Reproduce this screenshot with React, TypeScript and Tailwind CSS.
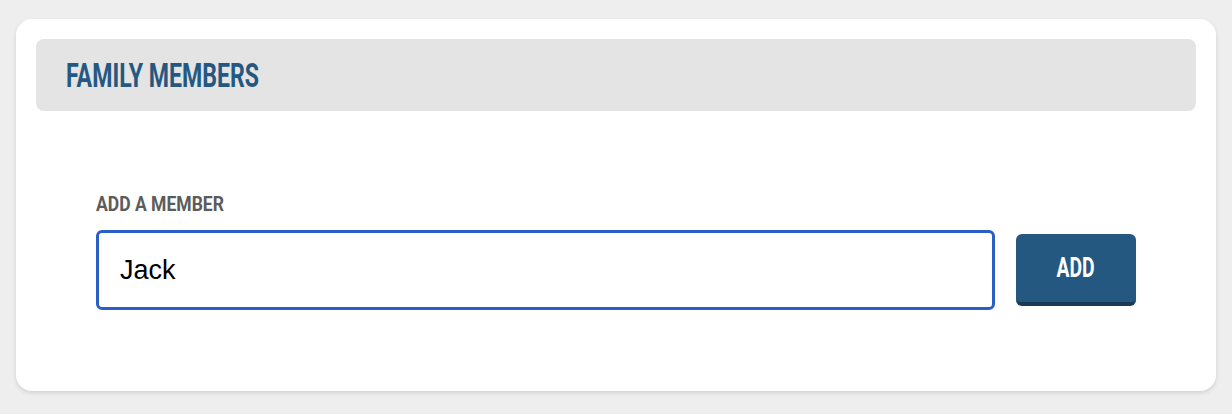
import React, { useState } from 'react';

const condensed = { fontFamily: 'Roboto, "DejaVu Sans Condensed", sans-serif' };

export default function App() {
    const [name, setName] = useState('Jack');

    return (
        <div className="min-h-screen bg-[#eeeeee] px-4 pt-[19px] pb-6">
            <div className="bg-white rounded-2xl p-5 shadow-[0_2px_4px_rgba(0,0,0,0.12)]">
                <div className="h-[72px] bg-[#e4e4e4] rounded-lg flex items-center px-[30px]">
                    <h2 style={condensed} className="inline-block origin-left scale-x-[0.68] text-[34px] font-bold text-[#255880] leading-none whitespace-nowrap">
                        FAMILY MEMBERS
                    </h2>
                </div>
                <div className="px-[60px] pt-[83px] pb-[61px]">
                    <label style={condensed} className="block origin-left scale-x-[0.835] text-[21px] font-bold text-[#5c5c5c] leading-none mb-[15px] whitespace-nowrap">
                        ADD A MEMBER
                    </label>
                    <div className="flex items-center gap-[21px]">
                        <input
                            type="text"
                            value={name}
                            onChange={(e) => setName(e.target.value)}
                            style={{ fontFamily: '"Liberation Sans", Arial, sans-serif' }}
                            className="flex-1 h-[80px] border-[3px] border-[#2b5fc6] rounded-md px-[21px] text-[27px] text-black outline-none"
                        />
                        <button className="w-[120px] h-[72px] bg-[#255880] rounded-md border-b-4 border-[#183a56] flex items-center justify-center">
                            <span style={condensed} className="inline-block scale-x-[0.69] text-white text-[28px] font-bold leading-none">
                                ADD
                            </span>
                        </button>
                    </div>
                </div>
            </div>
        </div>
    );
}
